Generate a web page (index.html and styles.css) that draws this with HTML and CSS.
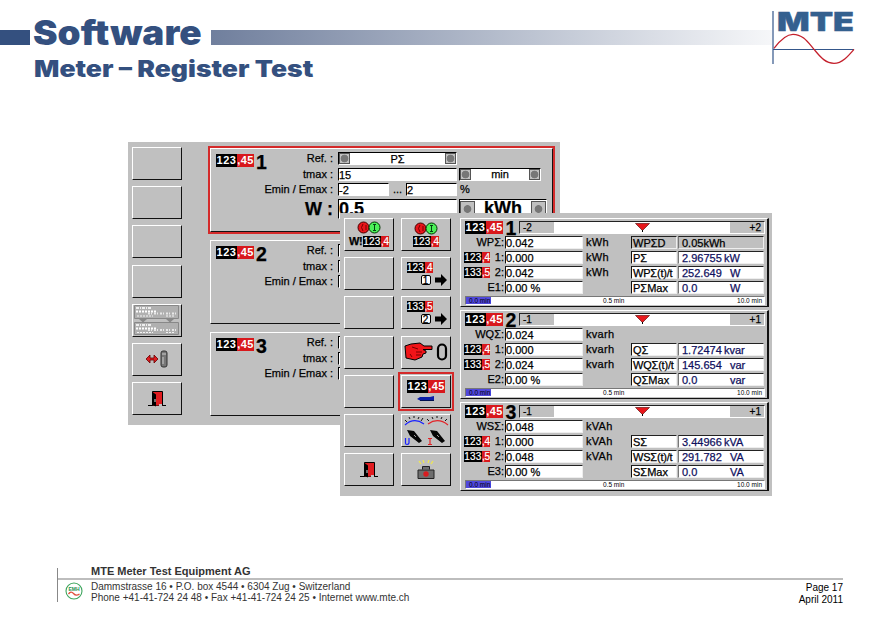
FILE: index.html
```html
<!DOCTYPE html>
<html lang="en">
<head>
<meta charset="utf-8">
<title>Software – Meter Register Test</title>
<link rel="stylesheet" href="styles.css">
</head>
<body>
<svg width="0" height="0" class="defs">
  <symbol id="door" viewBox="0 0 18 16"><path d="M0 14.5H18" stroke="#000" stroke-width="1"/><path d="M4.5 14.5V.5H14.5V14.5" fill="#e01c20" stroke="#000"/><path d="M4.500 1L8 3.500V15.500L4.500 14Z" fill="#000"/><path d="M7 8V11" stroke="#ddd"/><path d="M11 14H14" stroke="#c0c0c0" stroke-width="2"/></symbol>
  <symbol id="onoff" viewBox="0 0 24 13"><circle cx="6.500" cy="6.500" r="5.500" fill="#e8141a" stroke="#400" /><path d="M6 3L4.500 6.500L6 10M9 4V9" stroke="#700" fill="none"/><circle cx="17.500" cy="6.500" r="5.500" fill="#4cf058" stroke="#030"/><path d="M17.500 3.500V9.500M16 3.500H19M16 9.500H19" stroke="#041" fill="none"/></symbol>
  <symbol id="arrow" viewBox="0 0 12 12"><path d="M0 3.500H6V0L12 6L6 12V8.500H0Z"/></symbol>
</svg>
<div class="slide">
  <header class="head">
    <div class="bar-left"></div>
    <h1>Software</h1>
    <div class="bar-right"></div>
    <h2>Meter – Register Test</h2>
    <svg class="logo" viewBox="0 0 84 56" width="84" height="56">
      <text x="5" y="23" textLength="77" lengthAdjust="spacingAndGlyphs">MTE</text>
      <path d="M1 3V56M1 41.500H82" stroke="#34568a" stroke-width="1.200"/>
      <path d="M2 41C8 33 14 27 21 27C31 27 36 35 42 42C48 49 53 56 62 56C70 56 76 49 82 42" fill="none" stroke="#c4202c" stroke-width="1.300" transform="translate(0 -.7)"/>
    </svg>
  </header>

  <main class="stage">
    <section class="window back">
      <div class="keys">
        <div class="key"></div><div class="key"></div><div class="key"></div><div class="key"></div>
        <div class="key">
          <svg width="46" height="30" viewBox="0 0 46 30"><path d="M.5 .5H44.500V13.500H.5ZM.5 17.500H44.500V29.500H.5Z" fill="#b0b0b0" stroke="#888"/><path d="M2 3H17M2 20H17" stroke="#eee" stroke-width="2" stroke-dasharray="3 1 1 1"/><path d="M2 6.500H22M2 23.500H22" stroke="#fff" stroke-width="2" stroke-dasharray="2 1"/><path d="M14 8.500H43M14 25H43" stroke="#e8e8e8" stroke-width="2" stroke-dasharray="2 1 1 2"/><path d="M3 11H19M32 11H41M3 27.500H19M32 27.500H41" stroke="#f4f4f4" stroke-dasharray="2 1"/><path d="M5 14H13L9 17.500ZM32 14H40L36 17.500Z" fill="#888"/></svg>
        </div>
        <div class="key">
          <svg width="24" height="18" viewBox="0 0 24 18"><path d="M1 9L5 5V8H9V5L13 9L9 13V10H5V13Z" fill="#e01c20" stroke="#600" stroke-width=".8"/><rect x="16" y="1" width="6" height="16" rx="2" fill="#777" stroke="#333"/><path d="M17 4H21M18 7V14" stroke="#ccc"/></svg>
        </div>
        <div class="key"><svg width="18" height="16"><use href="#door"/></svg></div>
      </div>
      <div class="groups">
        <div class="group active">
          <div class="tag"><span class="badge"><b>123</b><i>,45</i></span><strong>1</strong></div>
          <div class="form">
            <label>Ref.&nbsp;:</label><div class="line"><span class="box w120 pick"><em></em>PΣ<em></em></span></div>
            <label>tmax&nbsp;:</label><div class="line"><span class="box w120">15</span><span class="box w82 pick"><em></em>min<em></em></span></div>
            <label>Emin / Emax&nbsp;:</label><div class="line"><span class="box w51">-2</span><span class="dots">...</span><span class="box w51">2</span><span class="pct">%</span></div>
            <label class="big">W&nbsp;:</label><div class="line big"><span class="box w120">0.5</span><span class="box w88 pick"><em></em>kWh<em></em></span></div>
          </div>
        </div>
        <div class="group">
          <div class="tag"><span class="badge"><b>123</b><i>,45</i></span><strong>2</strong></div>
          <div class="form">
            <label>Ref.&nbsp;:</label><div class="line"><span class="box w120"></span></div>
            <label>tmax&nbsp;:</label><div class="line"><span class="box w120"></span></div>
            <label>Emin / Emax&nbsp;:</label><div class="line"><span class="box w120"></span></div>
          </div>
        </div>
        <div class="group">
          <div class="tag"><span class="badge"><b>123</b><i>,45</i></span><strong>3</strong></div>
          <div class="form">
            <label>Ref.&nbsp;:</label><div class="line"><span class="box w120"></span></div>
            <label>tmax&nbsp;:</label><div class="line"><span class="box w120"></span></div>
            <label>Emin / Emax&nbsp;:</label><div class="line"><span class="box w120"></span></div>
          </div>
        </div>
      </div>
    </section>

    <section class="window front">
      <div class="keys two">
        <div class="key col"><svg width="24" height="13"><use href="#onoff"/></svg><div class="row"><span class="wtxt">W!</span><span class="badge sm"><b>123</b><i>,4</i></span></div></div>
        <div class="key col"><svg width="24" height="13"><use href="#onoff"/></svg><div class="row"><span class="badge sm"><b>123</b><i>,4</i></span></div></div>
        <div class="key"></div>
        <div class="key col step"><span class="badge sm"><b>123</b><i>,4</i></span><div class="row"><span class="num">1</span><svg width="12" height="12"><use href="#arrow"/></svg></div></div>
        <div class="key"></div>
        <div class="key col step"><span class="badge sm"><b>133</b><i>,5</i></span><div class="row"><span class="num">2</span><svg width="12" height="12"><use href="#arrow"/></svg></div></div>
        <div class="key"></div>
        <div class="key">
          <svg width="44" height="20" viewBox="0 0 44 20"><path d="M1 4L7 2L16 1L20 4H28V7.500H19L22 9V11L19 12L18 15L11 18L2 16Z" fill="#f01418" stroke="#000"/><path d="M8 5L14 7M12 10H18M12 13H17M6 12L8 15" stroke="#700" fill="none"/><rect x="34" y="2.500" width="8" height="15" rx="4" fill="none" stroke="#000" stroke-width="2.200"/></svg>
        </div>
        <div class="key"></div>
        <div class="key col selected"><span class="badge"><b>123</b><i>,45</i></span><svg width="18" height="6" viewBox="0 0 18 6"><path d="M0 3L3 1H13L17 0V5L13 4.500H3Z" fill="#0a1ea8"/><path d="M3 4.500H17" stroke="#001050"/></svg></div>
        <div class="key"></div>
        <div class="key">
          <svg width="46" height="31" viewBox="0 0 46 31"><path d="M2 10Q11 2 21 9" fill="none" stroke="#1a22ff" stroke-width="1.200"/><path d="M25 9Q35 2 45 10" fill="none" stroke="#e32428" stroke-width="1.200"/><path d="M2 5L4 7M6 2L7 4M11 1V3M16 2L15 4M20 3L18 6M24 4L26 6M29 2L30 4M34 1V3M39 2L38 4M44 4L42 6" stroke="#111"/><path d="M4 15L11 16L19 26L16 28L7 21ZM27 15L34 16L42 26L39 28L30 21Z" fill="#050505"/><path d="M11 20L13 22M34 20L36 22" stroke="#999"/><path d="M2.500 23V28Q2.500 29.500 4 29.500T6 28V23" fill="none" stroke="#1a22ff" stroke-width="1.200"/><path d="M25 23.500H29M27 23V29M25 29.500H29" fill="none" stroke="#e32428" stroke-width="1.200"/></svg>
        </div>
        <div class="key"><svg width="18" height="16"><use href="#door"/></svg></div>
        <div class="key"><svg width="18" height="20" viewBox="0 0 18 20"><path d="M2 1L4 4M6 0L7 3M12 0L11 3M16 1L14 4" stroke="#f0e850" stroke-width="1.300"/><path d="M5.500 9.500V6.500H12.500V9.500M1 10H17V18.500H1Z" fill="#6e6e6e" stroke="#222"/><circle cx="9" cy="14" r="2.700" fill="#d81c20"/></svg></div>
      </div>

      <div class="panels">
        <article class="panel">
          <div class="scale-row"><span class="badge"><b>123</b><i>,45</i></span><strong>1</strong><div class="scale"><span>-2</span><svg width="15" height="9" viewBox="0 0 15 9"><path d="M.5 .5H14.500L7.500 7.500Z" fill="#e8181c" stroke="#611" stroke-width=".7"/><path d="M7.500 7V9" stroke="#000"/></svg><span>+2</span></div></div>
          <div class="data">
            <label>WPΣ:</label><span class="val">0.042</span><span class="unit">kWh</span><span class="name gray">WPΣD</span><span class="read gray">0.05kWh</span>
            <label><span class="badge sm"><b>123</b><i>,4</i></span>1:</label><span class="val">0.000</span><span class="unit">kWh</span><span class="name">PΣ</span><span class="read">2.96755 <u class="k">kW</u></span>
            <label><span class="badge sm"><b>133</b><i>,5</i></span>2:</label><span class="val">0.042</span><span class="unit">kWh</span><span class="name tight">WPΣ(t)/t</span><span class="read">252.649 <u>W</u></span>
            <label>E1:</label><span class="val">0.00 %</span><span></span><span class="name">PΣMax</span><span class="read">0.0 <u>W</u></span>
          </div>
          <div class="time"><span>0.0 min</span><span>0.5 min</span><span>10.0 min</span></div>
        </article>
        <article class="panel">
          <div class="scale-row"><span class="badge"><b>123</b><i>,45</i></span><strong>2</strong><div class="scale"><span>-1</span><svg width="15" height="9" viewBox="0 0 15 9"><path d="M.5 .5H14.500L7.500 7.500Z" fill="#e8181c" stroke="#611" stroke-width=".7"/><path d="M7.500 7V9" stroke="#000"/></svg><span>+1</span></div></div>
          <div class="data">
            <label>WQΣ:</label><span class="val">0.024</span><span class="unit">kvarh</span><span></span><span></span>
            <label><span class="badge sm"><b>123</b><i>,4</i></span>1:</label><span class="val">0.000</span><span class="unit">kvarh</span><span class="name">QΣ</span><span class="read">1.72474 <u class="k">kvar</u></span>
            <label><span class="badge sm"><b>133</b><i>,5</i></span>2:</label><span class="val">0.024</span><span class="unit">kvarh</span><span class="name tight">WQΣ(t)/t</span><span class="read">145.654 <u>var</u></span>
            <label>E2:</label><span class="val">0.00 %</span><span></span><span class="name">QΣMax</span><span class="read">0.0 <u>var</u></span>
          </div>
          <div class="time"><span>0.0 min</span><span>0.5 min</span><span>10.0 min</span></div>
        </article>
        <article class="panel">
          <div class="scale-row"><span class="badge"><b>123</b><i>,45</i></span><strong>3</strong><div class="scale"><span>-1</span><svg width="15" height="9" viewBox="0 0 15 9"><path d="M.5 .5H14.500L7.500 7.500Z" fill="#e8181c" stroke="#611" stroke-width=".7"/><path d="M7.500 7V9" stroke="#000"/></svg><span>+1</span></div></div>
          <div class="data">
            <label>WSΣ:</label><span class="val">0.048</span><span class="unit">kVAh</span><span></span><span></span>
            <label><span class="badge sm"><b>123</b><i>,4</i></span>1:</label><span class="val">0.000</span><span class="unit">kVAh</span><span class="name">SΣ</span><span class="read">3.44966 <u class="k">kVA</u></span>
            <label><span class="badge sm"><b>133</b><i>,5</i></span>2:</label><span class="val">0.048</span><span class="unit">kVAh</span><span class="name tight">WSΣ(t)/t</span><span class="read">291.782 <u>VA</u></span>
            <label>E3:</label><span class="val">0.00 %</span><span></span><span class="name">SΣMax</span><span class="read">0.0 <u>VA</u></span>
          </div>
          <div class="time"><span>0.0 min</span><span>0.5 min</span><span>10.0 min</span></div>
        </article>
      </div>
    </section>
  </main>

  <footer class="foot">
    <div class="company">MTE Meter Test Equipment AG</div>
    <div class="details">
      <svg class="seal" width="18" height="18" viewBox="0 0 18 18"><circle cx="9" cy="9" r="8" fill="none" stroke="#3da55d" stroke-width="1.100"/><text x="9" y="8.500" text-anchor="middle">EMH</text><path d="M3.500 12Q6 8.500 8.500 11.500T14.500 12" fill="none" stroke="#e0503c" stroke-width="1.300"/></svg>
      <div class="address"><div>Dammstrasse 16 • P.O. box 4544 • 6304 Zug • Switzerland</div><div>Phone +41-41-724 24 48 • Fax +41-41-724 24 25 • Internet www.mte.ch</div></div>
      <div class="page">Page 17<br>April 2011</div>
    </div>
  </footer>
</div>
</body>
</html>
```
FILE: styles.css
```css
* { box-sizing: border-box; }
body { margin: 0; background: #fff; font-family: "Liberation Sans", Arial, sans-serif; }
.defs { position: absolute; }
.slide { position: relative; width: 891px; height: 630px; overflow: hidden; display: flex; flex-direction: column; }

/* header */
.head { height: 142px; display: grid; grid-template-columns: 30px 181px 561px 84px; grid-template-rows: 30px 15px 97px; align-items: start; }
.bar-left { grid-area: 2 / 1; height: 15px; background: #34507f; }
.bar-right { grid-area: 2 / 3; height: 15px; background: linear-gradient(90deg, #707f9d, #f6f7f9); }
h1, h2 { margin: 0; color: #34507f; font-family: Inter, sans-serif; font-weight: 900; white-space: nowrap; justify-self: start; transform-origin: 0 0; }
h1 { grid-area: 1 / 2 / 3 / 3; margin: 12px 0 0 3px; font-size: 34px; line-height: 42px; transform: scaleX(1.085); }
h2 { grid-area: 3 / 2; margin: 10px 0 0 4px; font-size: 22.500px; line-height: 28px; transform: scaleX(1.180); }
.logo { grid-area: 1 / 4 / 4 / 5; margin-top: 8px; overflow: visible; }
.logo text { font: 900 26px Inter, sans-serif; fill: #34608f; stroke: #34608f; stroke-width: .4px; }

/* windows */
.stage { position: relative; height: 420px; padding-left: 128px; }
.window { width: 432px; height: 283px; background: #c0c0c0; display: flex; font-size: 11px; line-height: 13px; color: #000; -webkit-text-stroke: .25px; }
.back { padding: 5px 0 0 4px; }
.front { position: absolute; left: 340px; top: 71px; height: 283px; padding: 5px 0 0 4px; }

.keys { display: grid; grid-template-columns: 50px; grid-auto-rows: 33px; row-gap: 6.200px; align-content: start; }
.keys.two { grid-template-columns: 50px 50px; column-gap: 7px; }
.key { border: 1px solid #fff; border-right: 1.500px solid #111; border-bottom: 1.500px solid #111; display: flex; align-items: center; justify-content: center; }
.key.col { flex-direction: column; gap: 1px; }
.key .row { display: flex; align-items: center; }
.step .row { gap: 4px; padding-left: 15px; }
.step .badge { margin-right: 13px; }
.key.selected { outline: 2px solid #d42a2a; outline-offset: 1px; gap: 3px; }
.wtxt { font-size: 11px; font-weight: bold; width: 14px; letter-spacing: -.5px; }
.num { width: 10px; height: 10px; border: 1px solid #000; border-radius: 2px; background: #fff; font-size: 10px; line-height: 9px; text-align: center; }

.badge { display: inline-flex; width: 38px; height: 13px; font: bold 11px/13px "Liberation Sans", sans-serif; color: #fff; flex: none; -webkit-text-stroke: 0; }
.badge b { width: 21px; background: #000; text-align: center; letter-spacing: .5px; }
.badge i { width: 17px; background: #d8181c; font-style: normal; text-align: center; letter-spacing: .4px; }
.badge.sm { width: 26px; height: 11px; font-size: 10px; line-height: 11px; font-weight: normal; -webkit-text-stroke: .2px; }
.badge.sm b { width: 18px; font-weight: inherit; letter-spacing: .2px; }
.badge.sm i { width: 8px; letter-spacing: -.2px; }

/* settings groups */
.groups { margin-left: 28px; margin-top: 1px; display: flex; flex-direction: column; gap: 8px; }
.group { width: 343px; height: 84px; border: 1px solid #fff; border-right-color: #111; border-bottom: 1.500px solid #111; display: flex; }
.group.active { outline: 2px solid #d42a2a; }
.tag { width: 47px; display: flex; align-items: flex-start; padding: 5px 0 0 5px; }
.tag strong { font-size: 19.500px; line-height: 16px; margin-left: 2px; }
.form { display: grid; grid-template-columns: 75px 1fr; grid-template-rows: 13px 13px 13px 18px; row-gap: 2.500px; column-gap: 5px; padding-top: 3px; }
.form label { text-align: right; white-space: nowrap; line-height: 12px; }
.line { display: flex; gap: 2px; }
.box { height: 13px; border: 1px solid #fff; border-top-color: #000; border-left-color: #000; background: #fff; line-height: 12px; white-space: nowrap; }
.w120 { width: 119px; } .w51 { width: 51px; } .w82 { width: 82px; } .w88 { width: 88px; }
.dots { width: 13px; text-align: center; }
.pct { padding-left: 1px; }
.pick { display: flex; justify-content: space-between; align-items: center; }
.pick em { width: 11px; height: 11px; border: 1px solid #555; background: radial-gradient(circle, #777 0 3.500px, #c0c0c0 4.200px); }
.form label.big { font-size: 18px; line-height: 20px; font-weight: bold; }
.line.big { font-size: 18px; font-weight: bold; }
.line.big .box { height: 20px; line-height: 19px; }
.line.big em { width: 15px; height: 16px; }

/* measuring panels */
.panels { margin-left: 9px; display: flex; flex-direction: column; gap: 3px; }
.panel { width: 309px; height: 89px; border: 1px solid #fff; border-right: 2px solid #111; border-bottom: 1.500px solid #111; padding: 2px 2px 0 4px; }
.scale-row { display: flex; height: 13px; }
.scale-row strong { width: 16px; text-align: center; font-size: 19.500px; line-height: 14px; }
.scale { width: 246px; height: 13px; border: 1px solid #fff; border-top-color: #222; border-left-color: #222; background: #fff; display: flex; justify-content: space-between; align-items: center; font-size: 10px; line-height: 11px; }
.scale span { width: 34px; background: #c0c0c0; padding: 0 3px; }
.scale span:last-child { text-align: right; }
.data { display: grid; grid-template-columns: 39px 78px 46px 46px 86px; column-gap: 1px; grid-auto-rows: 13px; row-gap: 2px; margin-top: 2px; }
.data label { display: flex; justify-content: flex-end; align-items: center; white-space: nowrap; }
.data .badge { margin-right: auto; margin-left: -1px; }
.val, .name, .read { height: 13px; background: #fff; border: 1px solid #eee; border-top-color: #222; border-left-color: #111; line-height: 12px; white-space: nowrap; }
.unit { padding-left: 2px; letter-spacing: .3px; }
.name { padding-left: 1px; }
.read { color: #10105e; padding-left: 3px; border-left-color: #777; display: flex; }
.read u { text-decoration: none; margin-left: auto; width: 33px; }
.read u.k { width: 39px; }
.name.tight { letter-spacing: -.2px; }
.gray { background: #c0c0c0; color: #000; }
.time { margin-top: 2px; height: 9px; border: 1px solid #fff; border-top-color: #777; border-left-color: #777; background: linear-gradient(90deg, #5048dc 25px, #fff 25px); display: flex; justify-content: space-between; font-size: 6.500px; line-height: 7px; padding: 0 2px 0 3px; -webkit-text-stroke: 0; }

/* footer */
.foot { margin: 6px 0 0 57px; width: 786px; height: 34px; border-left: 1px solid #888; color: #333; }
.company { height: 12px; border-bottom: 2px solid #bdbdbd; padding-left: 33px; font-weight: bold; font-size: 11px; line-height: 7px; }
.details { display: flex; align-items: flex-start; }
.seal { margin: 2px 8px 0 7px; }
.seal text { font: bold 5px "Liberation Sans", sans-serif; fill: #25914b; }
.address { font-size: 10px; line-height: 11px; padding-top: 1px; white-space: nowrap; }
.page { margin-left: auto; text-align: right; font-size: 10px; line-height: 12px; padding-top: 2px; color: #000; white-space: nowrap; }
```
